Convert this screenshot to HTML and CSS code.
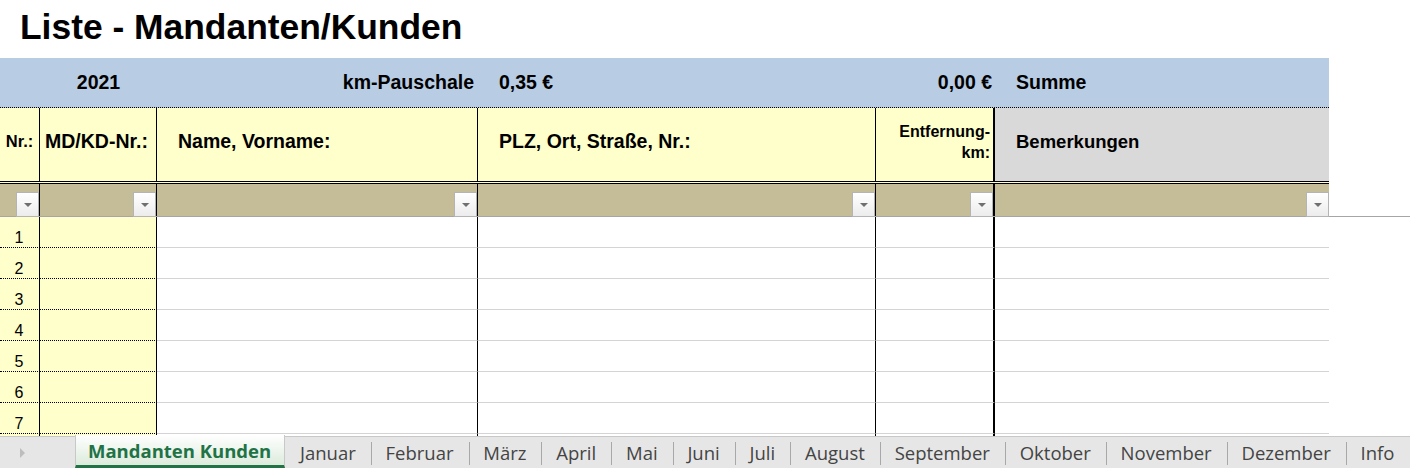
FILE: index.html
```html
<!DOCTYPE html>
<html lang="de">
<head>
<meta charset="utf-8">
<title>Liste - Mandanten/Kunden</title>
<link rel="stylesheet" href="styles.css">
</head>
<body>
<h1 class="title">Liste - Mandanten/Kunden</h1>

<div class="grid band">
  <div class="c"></div>
  <div class="c center">2021</div>
  <div class="c right pr4">km-Pauschale</div>
  <div class="c pl21">0,35 €</div>
  <div class="c right pr3">0,00 €</div>
  <div class="c pl21">Summe</div>
</div>

<div class="grid head">
  <div class="c b center small">Nr.:</div>
  <div class="c b pl5">MD/KD-Nr.:</div>
  <div class="c b pl21">Name, Vorname:</div>
  <div class="c b pl21">PLZ, Ort, Straße, Nr.:</div>
  <div class="c b2 right pr3 two">Entfernung-<br>km:</div>
  <div class="c grey pl21 bem">Bemerkungen</div>
</div>

<div class="filterwrap">
  <div class="grid filter">
    <div class="c b"><span class="dd"></span></div>
    <div class="c b"><span class="dd"></span></div>
    <div class="c b"><span class="dd"></span></div>
    <div class="c b"><span class="dd"></span></div>
    <div class="c b2"><span class="dd"></span></div>
    <div class="c"><span class="dd"></span></div>
  </div>
</div>

<div class="data">
  <div class="grid row"><div class="c b y dot num">1</div><div class="c b y dot"></div><div class="c b"></div><div class="c b"></div><div class="c b2"></div><div class="c"></div></div>
  <div class="grid row"><div class="c b y dot num">2</div><div class="c b y dot"></div><div class="c b"></div><div class="c b"></div><div class="c b2"></div><div class="c"></div></div>
  <div class="grid row"><div class="c b y dot num">3</div><div class="c b y dot"></div><div class="c b"></div><div class="c b"></div><div class="c b2"></div><div class="c"></div></div>
  <div class="grid row"><div class="c b y dot num">4</div><div class="c b y dot"></div><div class="c b"></div><div class="c b"></div><div class="c b2"></div><div class="c"></div></div>
  <div class="grid row"><div class="c b y dot num">5</div><div class="c b y dot"></div><div class="c b"></div><div class="c b"></div><div class="c b2"></div><div class="c"></div></div>
  <div class="grid row"><div class="c b y dot num">6</div><div class="c b y dot"></div><div class="c b"></div><div class="c b"></div><div class="c b2"></div><div class="c"></div></div>
  <div class="grid row"><div class="c b y dot num">7</div><div class="c b y dot"></div><div class="c b"></div><div class="c b"></div><div class="c b2"></div><div class="c"></div></div>
  <div class="grid row"><div class="c b y dot num">8</div><div class="c b y dot"></div><div class="c b"></div><div class="c b"></div><div class="c b2"></div><div class="c"></div></div>
</div>

<div class="tabs">
  <div class="nav"><span class="arrow"></span></div>
  <div class="tab active">Mandanten Kunden</div>
  <div class="tab first">Januar</div>
  <div class="tab">Februar</div>
  <div class="tab">März</div>
  <div class="tab">April</div>
  <div class="tab">Mai</div>
  <div class="tab">Juni</div>
  <div class="tab">Juli</div>
  <div class="tab">August</div>
  <div class="tab">September</div>
  <div class="tab">Oktober</div>
  <div class="tab">November</div>
  <div class="tab">Dezember</div>
  <div class="tab">Info</div>
</div>
</body>
</html>
```

FILE: styles.css
```css
html, body {
  margin: 0;
  padding: 0;
  background: #ffffff;
  overflow: hidden;
}
body {
  width: 1410px;
  height: 468px;
  font-family: "Liberation Sans", Arial, sans-serif;
  color: #000;
}
.title {
  margin: 0;
  height: 58px;
  line-height: 54px;
  padding-left: 20px;
  font-size: 35.4px;
  font-weight: bold;
  box-sizing: border-box;
}
.grid {
  display: grid;
  grid-template-columns: 40px 117px 321px 398px 119px 334px;
  width: 1329px;
}
.c {
  box-sizing: border-box;
  display: flex;
  align-items: center;
  min-width: 0;
  white-space: nowrap;
}
.center { justify-content: center; }
.right { justify-content: flex-end; text-align: right; }
.pl5 { padding-left: 5px; }
.pl21 { padding-left: 21px; }
.pr3 { padding-right: 3px; }
.pr4 { padding-right: 4px; }
.b { border-right: 1px solid #000; }
.b2 { border-right: 2px solid #000; }

/* blue band */
.band {
  height: 50px;
  background: #b8cce4;
  border-bottom: 1px dotted #000;
  box-sizing: border-box;
  font-size: 19.5px;
  font-weight: bold;
}

/* header */
.head {
  height: 76px;
  border-bottom: 3px double #000;
  box-sizing: border-box;
  background: #ffffcc;
  font-size: 19.5px;
  font-weight: bold;
}
.head .c { padding-bottom: 6px; }
.head .small { font-size: 16.5px; padding-left: 0; }
.head .two { font-size: 16px; line-height: 21px; }
.head .bem { font-size: 18.5px; }
.grey { background: #d9d9d9; }

/* filter row */
.filterwrap {
  width: 1410px;
  border-bottom: 1px solid #a6a6a6;
}
.filter { height: 32px; }
.filter .c {
  background: #c4bd97;
  justify-content: flex-end;
  align-items: flex-end;
}
.dd {
  box-sizing: border-box;
  width: 23px;
  height: 25px;
  border: 1px solid #b4b4b4;
  background: linear-gradient(#ffffff, #ececec);
  display: flex;
  align-items: center;
  justify-content: center;
  margin-bottom: -1px;
}
.dd::after {
  content: "";
  width: 0;
  height: 0;
  border-left: 4px solid transparent;
  border-right: 4px solid transparent;
  border-top: 4px solid #6f6f6f;
  margin-top: 1px;
}

/* data */
.data {
  height: 219px;
  overflow: hidden;
}
.row { height: 31px; }
.row .c {
  border-bottom: 1px solid #d4d4d4;
  align-items: flex-end;
}
.row .y { background: #ffffcc; }
.row .dot { border-bottom: 1px dotted #000; }
.row .num {
  justify-content: center;
  font-size: 16px;
  line-height: 18px;
  padding-right: 1px;
}

/* tabs */
.tabs {
  height: 32px;
  box-sizing: border-box;
  background: #e6e6e6;
  border-top: 1px solid #c8c8c8;
  display: flex;
  align-items: stretch;
  font-family: "Open Sans", "Noto Sans", sans-serif;
  font-size: 18.5px;
  color: #444;
}
.nav {
  width: 75px;
  flex: none;
  display: flex;
  align-items: center;
  padding-left: 20px;
  box-sizing: border-box;
}
.arrow {
  width: 0;
  height: 0;
  border-top: 5px solid transparent;
  border-bottom: 5px solid transparent;
  border-left: 5px solid #bdbdbd;
}
.tab {
  display: flex;
  align-items: center;
  padding: 0 15px 0 14.8px;
  position: relative;
  white-space: nowrap;
  flex: none;
}
.tab + .tab:not(.first)::before {
  content: "";
  position: absolute;
  left: 0;
  top: 5px;
  bottom: 3px;
  width: 1px;
  background: #a8a8a8;
}
.tab.active {
  margin-top: -2px;
  padding: 0 13px 0 12px;
  background: linear-gradient(#ffffff, #dcebdc);
  color: #217346;
  font-weight: bold;
  border-left: 1px solid #c8c8c8;
  border-right: 1px solid #c8c8c8;
  border-bottom: 3px solid #217346;
}
```
